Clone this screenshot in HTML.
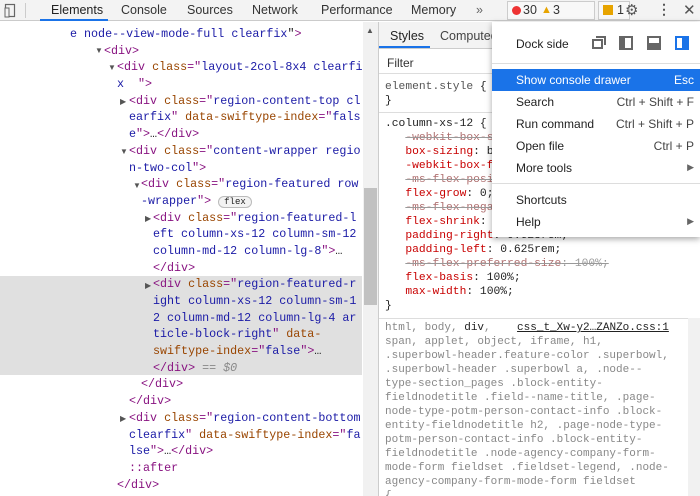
<!DOCTYPE html>
<html><head><meta charset="utf-8"><style>
*{margin:0;padding:0;box-sizing:border-box}
html,body{width:700px;height:496px;overflow:hidden}
body{background:#fff;font-family:"Liberation Sans",sans-serif;position:relative}
.a{position:absolute;white-space:pre}
#tb{position:absolute;left:0;top:0;width:700px;height:21px;background:#f3f3f3;border-bottom:1px solid #cbcbcb}
#tb .a{font-size:12.5px;color:#333;top:3px}
.el{font-family:"Liberation Mono",monospace;font-size:11.7px;color:#222;position:absolute;line-height:16.7px}
.el div{white-space:pre;height:16.7px}
.t{color:#881280}.n{color:#994500}.v{color:#1a1aa6}
.tri{position:absolute;font-size:8px;color:#555}
.st{font-family:"Liberation Mono",monospace;font-size:11.3px;position:absolute;white-space:pre;line-height:14px}
.p{color:#c80000}.s{text-decoration:line-through;color:#999}.s .p{color:#b07070}
.g{color:#888}
#menu{position:absolute;left:492px;top:22px;width:208px;height:215px;background:#fff;box-shadow:0 2px 6px rgba(0,0,0,.35);font-size:12px;color:#222}
#menu .a{font-size:12px}
#menu .r{right:6px;color:#444}
</style></head><body>
<div id="tb">
<svg class="a" style="left:4px;top:3px" width="12" height="15"><rect x="1.5" y="1.5" width="9" height="12" fill="none" stroke="#666" stroke-width="1.2"/><rect x="1" y="5" width="4" height="9" fill="#f3f3f3" stroke="#666" stroke-width="1"/></svg>
<div class="a" style="left:25px;top:3px;width:1px;height:15px;background:#ccc"></div>
<div class="a" style="left:51px;color:#222">Elements</div>
<div class="a" style="left:40px;top:19px;width:68px;height:2px;background:#1a73e8"></div>
<div class="a" style="left:121px">Console</div>
<div class="a" style="left:187px">Sources</div>
<div class="a" style="left:252px">Network</div>
<div class="a" style="left:321px">Performance</div>
<div class="a" style="left:411px">Memory</div>
<div class="a" style="left:476px;color:#666">»</div>
<div class="a" style="left:507px;top:1px;width:88px;height:19px;border:1px solid #ccc;background:#f8f8f8"></div>
<div class="a" style="left:512px;top:6px;width:9px;height:9px;border-radius:50%;background:#e33"></div>
<div class="a" style="left:523px">30</div>
<div class="a" style="left:541px;color:#e7a400;font-size:11px;top:4px">▲</div>
<div class="a" style="left:553px">3</div>
<div class="a" style="left:598px;top:1px;width:32px;height:19px;border:1px solid #ccc;background:#f8f8f8"></div>
<div class="a" style="left:603px;top:5px;width:10px;height:10px;background:#e7a400"></div>
<div class="a" style="left:617px">1</div>
<div class="a" style="left:642px;top:3px;width:1px;height:15px;background:#ccc;display:none"></div>
<div class="a" style="left:625px;top:1px;font-size:15px;color:#555">⚙</div>
<div class="a" style="left:657px;top:1px;font-size:14px;color:#555;font-weight:bold">⋮</div>
<div class="a" style="left:683px;top:1px;font-size:15px;color:#555">✕</div>
</div>

<div class="a" style="left:0;top:276px;width:362px;height:99px;background:#e0e0e0"></div>
<div class="el" style="left:0;top:26px;width:362px"><div style="padding-left:70px"><span class="v">e node--view-mode-full clearfix</span>"<span class="t">&gt;</span></div><div style="padding-left:104px"><span class="t">&lt;div&gt;</span></div><div style="padding-left:117px"><span class="t">&lt;div </span><span class="n">class</span><span class="t">="</span><span class="v">layout-2col-8x4 clearfi</span></div><div style="padding-left:117px"><span class="v">x  </span><span class="t">"&gt;</span></div><div style="padding-left:129px"><span class="t">&lt;div </span><span class="n">class</span><span class="t">="</span><span class="v">region-content-top cl</span></div><div style="padding-left:129px"><span class="v">earfix</span><span class="t">" </span><span class="n">data-swiftype-index</span><span class="t">="</span><span class="v">fals</span></div><div style="padding-left:129px"><span class="v">e</span><span class="t">"&gt;</span>…<span class="t">&lt;/div&gt;</span></div><div style="padding-left:129px"><span class="t">&lt;div </span><span class="n">class</span><span class="t">="</span><span class="v">content-wrapper regio</span></div><div style="padding-left:129px"><span class="v">n-two-col</span><span class="t">"&gt;</span></div><div style="padding-left:141px"><span class="t">&lt;div </span><span class="n">class</span><span class="t">="</span><span class="v">region-featured row</span></div><div style="padding-left:141px"><span class="v">-wrapper</span><span class="t">"&gt;</span> <span style="font-size:9px;border:1px solid #bbb;border-radius:8px;padding:0 5px;background:#f3f3f3">flex</span></div><div style="padding-left:153px"><span class="t">&lt;div </span><span class="n">class</span><span class="t">="</span><span class="v">region-featured-l</span></div><div style="padding-left:153px"><span class="v">eft column-xs-12 column-sm-12</span></div><div style="padding-left:153px"><span class="v">column-md-12 column-lg-8</span><span class="t">"&gt;</span>…</div><div style="padding-left:153px"><span class="t">&lt;/div&gt;</span></div><div style="padding-left:153px"><span class="t">&lt;div </span><span class="n">class</span><span class="t">="</span><span class="v">region-featured-r</span></div><div style="padding-left:153px"><span class="v">ight column-xs-12 column-sm-1</span></div><div style="padding-left:153px"><span class="v">2 column-md-12 column-lg-4 ar</span></div><div style="padding-left:153px"><span class="v">ticle-block-right</span><span class="t">" </span><span class="n">data-</span></div><div style="padding-left:153px"><span class="n">swiftype-index</span><span class="t">="</span><span class="v">false</span><span class="t">"&gt;</span>…</div><div style="padding-left:153px"><span class="t">&lt;/div&gt;</span> <span style="color:#888;font-style:italic">== $0</span></div><div style="padding-left:141px"><span class="t">&lt;/div&gt;</span></div><div style="padding-left:129px"><span class="t">&lt;/div&gt;</span></div><div style="padding-left:129px"><span class="t">&lt;div </span><span class="n">class</span><span class="t">="</span><span class="v">region-content-bottom</span></div><div style="padding-left:129px"><span class="v">clearfix</span><span class="t">" </span><span class="n">data-swiftype-index</span><span class="t">="</span><span class="v">fa</span></div><div style="padding-left:129px"><span class="v">lse</span><span class="t">"&gt;</span>…<span class="t">&lt;/div&gt;</span></div><div style="padding-left:129px"><span class="t">::after</span></div><div style="padding-left:117px"><span class="t">&lt;/div&gt;</span></div></div>
<div class="tri" style="left:95px;top:46px">▼</div>
<div class="tri" style="left:108px;top:63px">▼</div>
<div class="tri" style="left:120px;top:97px">▶</div>
<div class="tri" style="left:120px;top:147px">▼</div>
<div class="tri" style="left:133px;top:181px">▼</div>
<div class="tri" style="left:145px;top:214px">▶</div>
<div class="tri" style="left:145px;top:281px">▶</div>
<div class="tri" style="left:120px;top:414px">▶</div>

<div class="a" style="left:363px;top:22px;width:15px;height:474px;background:#f1f1f1"></div>
<div class="a" style="left:364px;top:188px;width:13px;height:117px;background:#c1c1c1"></div>
<div class="a" style="left:366px;top:26px;font-size:8px;color:#555">▲</div>
<div class="a" style="left:378px;top:22px;width:1px;height:474px;background:#ccc"></div>

<div class="a" style="left:379px;top:22px;width:321px;height:27px;background:#f3f3f3;border-bottom:1px solid #ccc"></div>
<div class="a" style="left:390px;top:29px;font-size:12.5px;color:#222">Styles</div>
<div class="a" style="left:379px;top:46px;width:51px;height:2px;background:#1a73e8"></div>
<div class="a" style="left:440px;top:29px;font-size:12.5px;color:#444">Computed</div>
<div class="a" style="left:379px;top:50px;width:321px;height:24px;border-bottom:1px solid #ddd"></div>
<div class="a" style="left:387px;top:56px;font-size:12px;color:#333">Filter</div>
<div class="st" style="left:385px;top:80px;color:#555">element.style <span style="color:#222">{</span><br><span style="color:#222">}</span></div>
<div class="a" style="left:379px;top:112px;width:321px;height:1px;background:#ddd"></div>
<div class="st" style="left:385px;top:117px;color:#222">.column-xs-12 {
   <span class="s"><span class="p">-webkit-box-sizing</span>: border-box;</span>
   <span class="p">box-sizing</span>: border-box;
   <span class="p">-webkit-box-flex</span>: 0;
   <span class="s"><span class="p">-ms-flex-positive</span>: 0;</span>
   <span class="p">flex-grow</span>: 0;
   <span class="s"><span class="p">-ms-flex-negative</span>: 1;</span>
   <span class="p">flex-shrink</span>: 1;
   <span class="p">padding-right</span>: 0.625rem;
   <span class="p">padding-left</span>: 0.625rem;
   <span class="s"><span class="p">-ms-flex-preferred-size</span>: 100%;</span>
   <span class="p">flex-basis</span>: 100%;
   <span class="p">max-width</span>: 100%;
}</div>
<div class="a" style="left:379px;top:318px;width:321px;height:1px;background:#ddd"></div>
<div class="st g" style="left:385px;top:321px;font-size:11px">html, body, <span style="color:#222">div</span>,    <span style="color:#222;text-decoration:underline">css_t_Xw-y2…ZANZo.css:1</span>
span, applet, object, iframe, h1,
.superbowl-header.feature-color .superbowl,
.superbowl-header .superbowl a, .node--
type-section_pages .block-entity-
fieldnodetitle .field--name-title, .page-
node-type-potm-person-contact-info .block-
entity-fieldnodetitle h2, .page-node-type-
potm-person-contact-info .block-entity-
fieldnodetitle .node-agency-company-form-
mode-form fieldset .fieldset-legend, .node-
agency-company-form-mode-form fieldset
{</div>
<div class="a" style="left:688px;top:318px;width:12px;height:178px;background:#f1f1f1"></div>

<div id="menu">
<div class="a" style="left:24px;top:15px">Dock side</div>
<svg class="a" style="left:97px;top:13px" width="100" height="16">
<rect x="4" y="5" width="9" height="8" fill="none" stroke="#666" stroke-width="2"/><path d="M7 2h9v8" fill="none" stroke="#666" stroke-width="2"/>
<rect x="31" y="2" width="12" height="12" fill="none" stroke="#666" stroke-width="2"/><rect x="31" y="2" width="5" height="12" fill="#666"/>
<rect x="59" y="2" width="12" height="12" fill="none" stroke="#666" stroke-width="2"/><rect x="59" y="8" width="12" height="6" fill="#666"/>
<rect x="87" y="2" width="12" height="12" fill="none" stroke="#1a73e8" stroke-width="2"/><rect x="93" y="2" width="6" height="12" fill="#1a73e8"/>
</svg>
<div class="a" style="left:0;top:41px;width:208px;height:1px;background:#ddd"></div>
<div class="a" style="left:0;top:47px;width:208px;height:22px;background:#1a73e8"></div>
<div class="a" style="left:24px;top:51px;color:#fff">Show console drawer</div>
<div class="a r" style="top:51px;color:#fff">Esc</div>
<div class="a" style="left:24px;top:73px">Search</div><div class="a r" style="top:73px">Ctrl + Shift + F</div>
<div class="a" style="left:24px;top:95px">Run command</div><div class="a r" style="top:95px">Ctrl + Shift + P</div>
<div class="a" style="left:24px;top:117px">Open file</div><div class="a r" style="top:117px">Ctrl + P</div>
<div class="a" style="left:24px;top:139px">More tools</div><div class="a r" style="top:140px;font-size:9px;color:#666">▶</div>
<div class="a" style="left:0;top:161px;width:208px;height:1px;background:#ddd"></div>
<div class="a" style="left:24px;top:171px">Shortcuts</div>
<div class="a" style="left:24px;top:193px">Help</div><div class="a r" style="top:194px;font-size:9px;color:#666">▶</div>
</div>
</body></html>
